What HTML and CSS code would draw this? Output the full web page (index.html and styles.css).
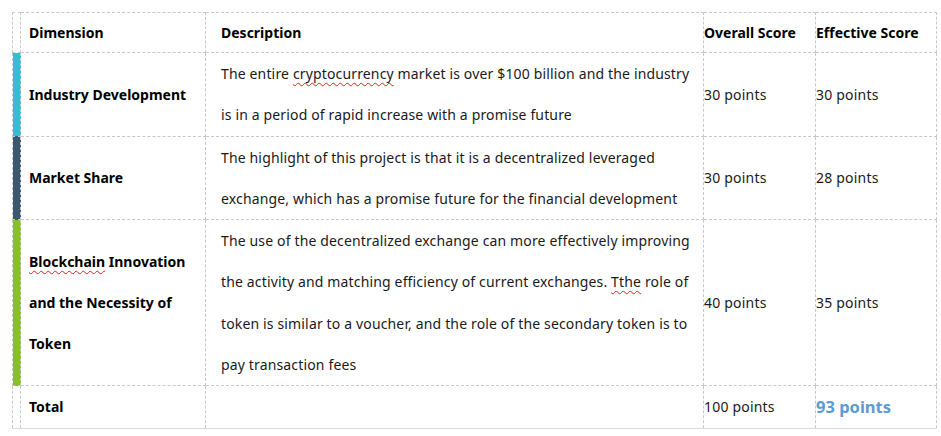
FILE: index.html
```html
<!DOCTYPE html>
<html>
<head>
<meta charset="utf-8">
<link rel="stylesheet" href="styles.css">
</head>
<body>
<table class="score-table">
  <colgroup>
    <col class="c-bar">
    <col class="c-dim">
    <col class="c-desc">
    <col class="c-overall">
    <col class="c-effective">
  </colgroup>
  <tr class="head-row">
    <td class="bar"></td>
    <td class="dim">Dimension</td>
    <td class="desc head">Description</td>
    <td class="score head">Overall Score</td>
    <td class="score head">Effective Score</td>
  </tr>
  <tr>
    <td class="bar bar-cyan"></td>
    <td class="dim">Industry Development</td>
    <td class="desc">The entire <span class="spell">cryptocurrency</span> market is over $100 billion and the industry is in a period of rapid increase with a promise future</td>
    <td class="score">30 points</td>
    <td class="score">30 points</td>
  </tr>
  <tr>
    <td class="bar bar-slate"></td>
    <td class="dim">Market Share</td>
    <td class="desc">The highlight of this project is that it is a decentralized leveraged exchange, which has a promise future for the financial development</td>
    <td class="score">30 points</td>
    <td class="score">28 points</td>
  </tr>
  <tr>
    <td class="bar bar-green"></td>
    <td class="dim"><span class="spell">Blockchain</span> Innovation and the Necessity of Token</td>
    <td class="desc">The use of the decentralized exchange can more effectively improving the activity and matching efficiency of current exchanges. <span class="spell">Tthe</span> role of token is similar to a voucher, and the role of the secondary token is to pay transaction fees</td>
    <td class="score">40 points</td>
    <td class="score">35 points</td>
  </tr>
  <tr class="total-row">
    <td class="bar"></td>
    <td class="dim">Total</td>
    <td class="desc"></td>
    <td class="score">100 points</td>
    <td class="score total-eff">93 points</td>
  </tr>
</table>
</body>
</html>
```

FILE: styles.css
```css
html, body {
  margin: 0;
  padding: 0;
  background: #ffffff;
}

body {
  padding: 12px 0 0 12px;
  font-family: "Noto Sans", "Open Sans", "Liberation Sans", sans-serif;
  font-size: 14px;
  color: #1a1a1a;
}

.score-table {
  border-collapse: collapse;
  table-layout: fixed;
  width: 925px;
}

.c-bar { width: 8px; }
.c-dim { width: 185px; }
.c-desc { width: 498px; }
.c-overall { width: 112px; }
.c-effective { width: 121px; }

.score-table td {
  border: 1px dashed #c9c9c9;
  padding: 0;
  line-height: 41.3px;
  vertical-align: middle;
}

.head-row td {
  line-height: 39px;
}

.score-table tr:last-child td {
  border-bottom: 1px solid #dcdcdc;
}

.bar { padding: 0; }
.bar-cyan { background: #38bcd4; }
.bar-slate { background: #3c5870; }
.bar-green { background: #86c126; }

.dim {
  padding-left: 8px !important;
  padding-right: 8px !important;
  font-weight: bold;
  color: #000;
}

.desc {
  padding-left: 15px !important;
  padding-right: 8px !important;
  letter-spacing: 0.15px;
}

.score {
  padding-left: 0;
  white-space: nowrap;
  letter-spacing: 0.2px;
}

.head {
  font-weight: bold;
  color: #000;
  letter-spacing: 0;
}

.spell {
  text-decoration: underline wavy #e02020;
  text-decoration-thickness: 1px;
  text-underline-offset: 3px;
}

.total-eff {
  color: #5b9bd5;
  font-weight: bold;
  font-size: 16.5px;
  letter-spacing: 0;
}
```
